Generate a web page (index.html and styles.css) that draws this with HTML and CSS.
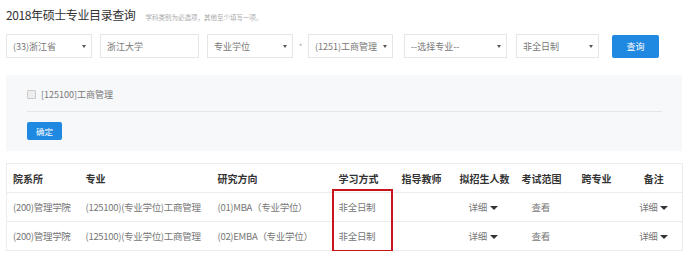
FILE: index.html
```html
<!DOCTYPE html>
<html lang="zh-CN">
<head>
    <meta charset="UTF-8">
    <title>2018年硕士专业目录查询</title>
    <link rel="stylesheet" href="styles.css">
</head>
<body>
    <div class="page">
        <div class="title">
            <span class="title-text">2018年硕士专业目录查询</span>
            <span class="hint">学科类别为必选项，其他至少填写一项。</span>
        </div>

        <div class="search-row">
            <div class="select w86">(33)浙江省<span class="caret"></span></div>
            <div class="input w99">浙江大学</div>
            <div class="select w86">专业学位<span class="caret"></span></div>
            <span class="star">*</span>
            <div class="select w85">(1251)工商管理<span class="caret"></span></div>
            <div class="select w103">--选择专业--<span class="caret"></span></div>
            <div class="select w83">非全日制<span class="caret"></span></div>
            <button class="btn btn-search">查询</button>
        </div>

        <div class="panel">
            <label class="check-item"><span class="checkbox"></span>[125100]工商管理</label>
            <div class="divider"></div>
            <button class="btn btn-ok">确定</button>
        </div>

        <div class="table-wrap">
            <table class="result">
                <colgroup>
                    <col style="width:73px">
                    <col style="width:132px">
                    <col style="width:121px">
                    <col style="width:63px">
                    <col style="width:58px">
                    <col style="width:62px">
                    <col style="width:60px">
                    <col style="width:50px">
                    <col style="width:57px">
                </colgroup>
                <thead>
                    <tr>
                        <th>院系所</th>
                        <th>专业</th>
                        <th>研究方向</th>
                        <th>学习方式</th>
                        <th>指导教师</th>
                        <th>拟招生人数</th>
                        <th>考试范围</th>
                        <th>跨专业</th>
                        <th class="center">备注</th>
                    </tr>
                </thead>
                <tbody>
                    <tr>
                        <td>(200)管理学院</td>
                        <td>(125100)(专业学位)工商管理</td>
                        <td>(01)MBA（专业学位）</td>
                        <td>非全日制</td>
                        <td></td>
                        <td class="detail">详细 <span class="tri"></span></td>
                        <td class="view">查看</td>
                        <td></td>
                        <td class="center">详细 <span class="tri"></span></td>
                    </tr>
                    <tr>
                        <td>(200)管理学院</td>
                        <td>(125100)(专业学位)工商管理</td>
                        <td>(02)EMBA（专业学位）</td>
                        <td>非全日制</td>
                        <td></td>
                        <td class="detail">详细 <span class="tri"></span></td>
                        <td class="view">查看</td>
                        <td></td>
                        <td class="center">详细 <span class="tri"></span></td>
                    </tr>
                </tbody>
            </table>
            <div class="highlight"></div>
        </div>
    </div>
</body>
</html>
```

FILE: styles.css
```css
body {
    margin: 0;
    background-color: #fff;
    font-family: "Noto Sans CJK SC", "Liberation Sans", sans-serif;
    color: #333;
}

.page {
    padding: 6px 6px 0 6px;
}

.title {
    display: flex;
    align-items: baseline;
    height: 20px;
}

.title-text {
    font-size: 12px;
    color: #333;
    letter-spacing: -0.4px;
}

.hint {
    font-size: 6.5px;
    color: #aaa;
    margin-left: 10px;
}

.search-row {
    display: flex;
    align-items: center;
    margin-top: 8px;
    height: 24px;
}

.select, .input {
    box-sizing: border-box;
    height: 24px;
    border: 1px solid #e6e6e6;
    display: flex;
    align-items: center;
    justify-content: space-between;
    padding: 0 5px 0 6px;
    font-size: 9px;
    color: #777;
    white-space: nowrap;
    margin-right: 8px;
}

.caret {
    width: 0;
    height: 0;
    border-top: 3px solid #555;
    border-left: 2px solid transparent;
    border-right: 2px solid transparent;
}

.w86 { width: 86px; }
.w99 { width: 99px; }
.w85 { width: 85px; margin-right: 11px; }
.w103 { width: 103px; margin-right: 9px; }
.w83 { width: 83px; margin-right: 13px; }

.star {
    font-size: 8px;
    color: #aaa;
    width: 15px;
    text-align: center;
    margin-left: -8px;
}

.btn {
    border: none;
    border-radius: 2px;
    background-color: #1f88e0;
    color: #fff;
    font-family: inherit;
    padding: 0;
    cursor: pointer;
}

.btn-search {
    width: 47px;
    height: 23px;
    font-size: 9px;
}

.panel {
    margin-top: 17px;
    width: 676px;
    box-sizing: border-box;
    height: 76px;
    background-color: #f7f8fa;
    padding: 12px 20px 0 21px;
}

.check-item {
    display: flex;
    align-items: center;
    height: 14px;
    font-size: 9px;
    color: #777;
}

.checkbox {
    width: 7px;
    height: 7px;
    border: 1px solid #ccc;
    background-color: #eee;
    border-radius: 1px;
    margin-right: 5px;
}

.divider {
    height: 1px;
    background-color: #e5e5e5;
    margin-top: 10px;
}

.btn-ok {
    margin-top: 10px;
    width: 35px;
    height: 18px;
    font-size: 8.5px;
    display: block;
}

.table-wrap {
    position: relative;
    margin-top: 12px;
    width: 677px;
}

.result {
    width: 677px;
    table-layout: fixed;
    border-collapse: collapse;
    border: 1px solid #ececec;
}

.result th, .result td {
    height: 28px;
    padding: 0 6px;
    text-align: left;
    white-space: nowrap;
    border-bottom: 1px solid #ececec;
}

.result th {
    font-size: 10px;
    font-weight: bold;
    color: #333;
}

.result td {
    font-size: 9.5px;
    color: #777;
    letter-spacing: -0.3px;
}

.result .center {
    text-align: center;
}

.result td.detail {
    padding-left: 15px;
}

.result td.view {
    padding-left: 16px;
}

.tri {
    display: inline-block;
    width: 0;
    height: 0;
    border-top: 4px solid #333;
    border-left: 4px solid transparent;
    border-right: 4px solid transparent;
    vertical-align: middle;
    margin-left: 1px;
}

.highlight {
    position: absolute;
    left: 326px;
    top: 26px;
    width: 57px;
    height: 59px;
    border: 2px solid #c8151d;
}
```
